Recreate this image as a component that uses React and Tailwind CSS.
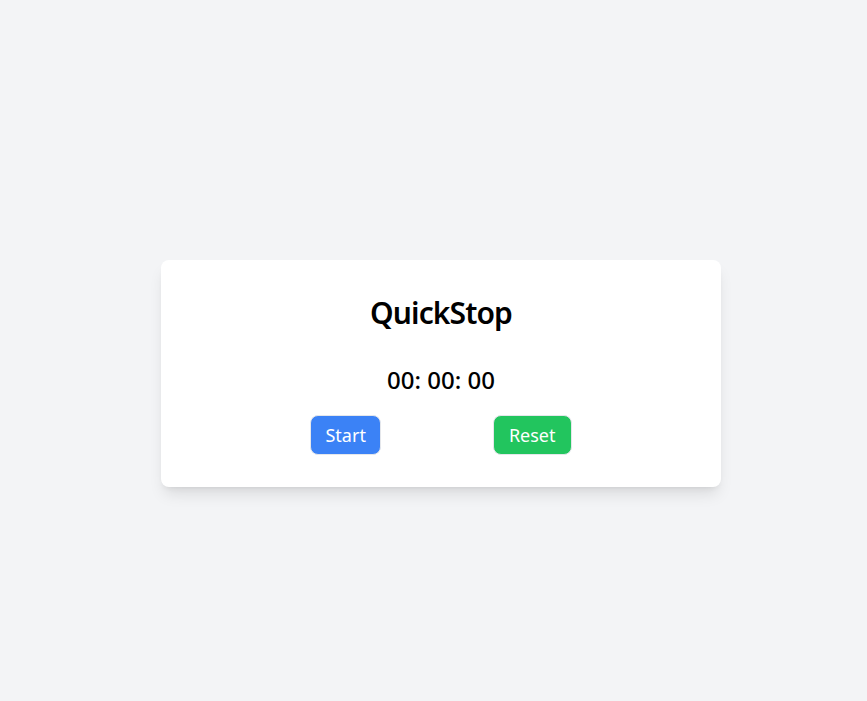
export default function App() {
  return (
    <div
      className="h-screen w-full bg-[#f3f4f6] flex items-center justify-center pl-[15px] pt-[46px]"
      style={{ fontFamily: '"Noto Sans", "Open Sans", sans-serif' }}
    >
      <div className="w-[560px] h-[227px] bg-white rounded-lg shadow-lg flex flex-col items-center pt-[35px]">
        <h1 className="text-[30px] leading-9 font-semibold tracking-[-0.03em] text-black">QuickStop</h1>
        <div className="mt-[33px] text-2xl leading-8 font-medium text-black">00: 00: 00</div>
        <div className="mt-[19px] flex gap-28">
          <button className="h-10 px-[14px] rounded-lg bg-[#3b82f6] text-white text-lg border border-gray-200">
            Start
          </button>
          <button className="h-10 px-[15px] rounded-lg bg-[#22c55e] text-white text-lg border border-gray-200">
            Reset
          </button>
        </div>
      </div>
    </div>
  );
}
